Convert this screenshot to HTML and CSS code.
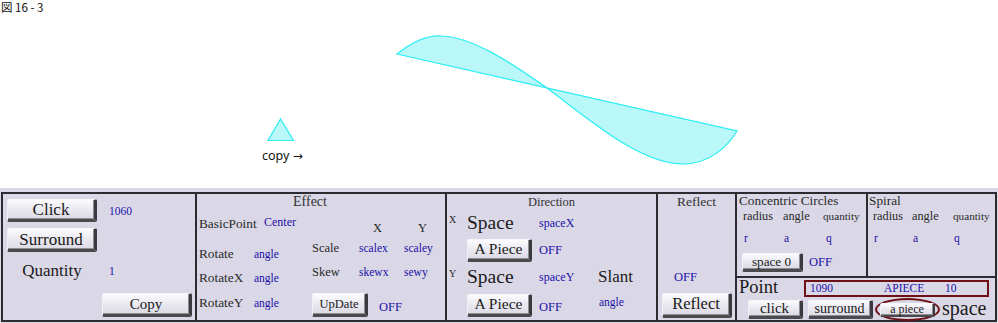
FILE: index.html
```html
<!DOCTYPE html>
<html lang="ja">
<head>
<meta charset="utf-8">
<title>図 16 - 3</title>
<link rel="stylesheet" href="styles.css">
</head>
<body>
<div class="stage">
  <div class="fig-title">図 16 - 3</div>
  <svg class="canvas" width="998" height="174" viewBox="0 14 998 174" xmlns="http://www.w3.org/2000/svg">
    <polygon class="shape" points="280.5,119 268,140.5 293.5,140.5"/>
    <text class="copy-label" x="262" y="160">copy <tspan class="arrow">→</tspan></text>
    <path class="shape" d="M397,54 C412,42 427,35 442,36 C472,37 510,62 547,88 C590,120 640,164 683,164 C710,164 728,146 737,131 Z"/>
  </svg>
</div>
<div class="panel">
  <div class="table">
    <div class="cell c-main">
      <button class="btn btn-main btn-click">Click</button><span class="val">1060</span>
      <button class="btn btn-main btn-surround">Surround</button><span></span>
      <span class="quantity">Quantity</span><span class="val">1</span>
      <button class="btn btn-copy">Copy</button>
    </div>
    <div class="cell c-effect">
      <div class="cap cap-effect">Effect</div>
      <div class="effect-body">
        <div class="rot-grid">
          <span class="lbl">BasicPoint</span><span class="val val-center">Center</span>
          <span class="lbl">Rotate</span><span class="val">angle</span>
          <span class="lbl">RotateX</span><span class="val">angle</span>
          <span class="lbl">RotateY</span><span class="val">angle</span>
        </div>
        <div class="scale-grid">
          <span></span><span class="axis">X</span><span class="axis">Y</span>
          <span class="lbl2">Scale</span><span class="val">scalex</span><span class="val">scaley</span>
          <span class="lbl2">Skew</span><span class="val">skewx</span><span class="val">sewy</span>
          <button class="btn btn-update">UpDate</button><span class="off off-update">OFF</span>
        </div>
      </div>
    </div>
    <div class="cell c-dir">
      <div class="cap cap-dir">Direction</div>
      <span class="axis-sm">X</span><span class="space-big">Space</span><span class="val val-dir">spaceX</span><span></span>
      <span></span><button class="btn btn-piece">A Piece</button><span class="off">OFF</span><span></span>
      <span class="axis-sm">Y</span><span class="space-big">Space</span><span class="val val-dir">spaceY</span><span class="slant">Slant</span>
      <span></span><button class="btn btn-piece">A Piece</button><span class="off off-low">OFF</span><span class="val angle-slant">angle</span>
    </div>
    <div class="cell c-ref">
      <div class="cap cap-ref">Reflect</div>
      <span></span>
      <span></span>
      <span class="off off-ref">OFF</span>
      <button class="btn btn-reflect">Reflect</button>
    </div>
    <div class="cell c-shapes">
      <div class="sub sub-circ">
        <div class="sub-title">Concentric Circles</div>
        <div class="param-grid circ-grid">
          <span class="hd">radius</span><span class="hd">angle</span><span class="hd hd-q">quantity</span>
          <span class="val pv">r</span><span class="val pv">a</span><span class="val pv pv-q">q</span>
        </div>
        <div class="row-btn"><button class="btn btn-space0">space 0</button><span class="off off-space">OFF</span></div>
      </div>
      <div class="sub sub-spiral">
        <div class="sub-title">Spiral</div>
        <div class="param-grid spiral-grid">
          <span class="hd">radius</span><span class="hd">angle</span><span class="hd hd-q">quantity</span>
          <span class="val pv">r</span><span class="val pv">a</span><span class="val pv">q</span>
        </div>
      </div>
      <div class="sub sub-point">
        <div class="point-row">
          <span class="point-lbl">Point</span>
          <div class="point-box"><span class="val">1090</span><span class="val">APIECE</span><span class="val">10</span></div>
        </div>
        <div class="point-btns">
          <button class="btn btn-click2">click</button>
          <button class="btn btn-surround2">surround</button>
          <span class="ring"><button class="btn btn-apiece">a piece</button></span>
          <span class="space-lbl">space</span>
        </div>
      </div>
    </div>
  </div>
</div>
</body>
</html>
```
FILE: styles.css
```css
html, body {
  margin: 0;
  padding: 0;
}
body {
  width: 998px;
  height: 323px;
  overflow: hidden;
  background: #ffffff;
  font-family: "Liberation Serif", serif;
  color: #222222;
}

/* ---------- drawing area ---------- */
.stage {
  height: 188px;
}
.fig-title {
  height: 13px;
  padding: 1px 0 0 1px;
  font-family: "Noto Sans CJK JP", "Noto Sans", sans-serif;
  font-size: 11.5px;
  line-height: 13px;
  color: #111111;
  white-space: nowrap;
}
.canvas {
  display: block;
}
.shape {
  fill: #b9f7f8;
  stroke: #2aeef2;
  stroke-width: 1.2;
}
.copy-label {
  font-family: "Noto Sans", sans-serif;
  font-size: 12.5px;
  fill: #111111;
}
.arrow {
  font-family: "DejaVu Sans", sans-serif;
  font-size: 12px;
}

/* ---------- control panel ---------- */
.panel {
  background: #dad8e6;
  padding: 4px 1px 1px 1px;
}
.table {
  display: grid;
  grid-template-columns: 192px 248px 209px 77px 258px;
  grid-template-rows: 126px;
  gap: 2px;
  padding: 2px;
  background: #2c2c30;
}
.cell {
  background: #dad8e6;
  min-width: 0;
}
.cap {
  text-align: center;
  line-height: 16px;
  height: 16px;
  color: #333333;
}
.val {
  color: #1c10a8;
  font-size: 11.5px;
  white-space: nowrap;
}
.off {
  color: #1c10a8;
  font-size: 12.5px;
}

/* ---------- buttons ---------- */
.btn {
  box-sizing: border-box;
  display: flex;
  align-items: center;
  justify-content: center;
  padding: 0;
  margin: 0;
  font-family: "Liberation Serif", serif;
  color: #1a1a1a;
  line-height: 1;
  background: linear-gradient(to bottom, #fcfcfe 0%, #ebeaf1 45%, #dcdae4 100%);
  border-style: solid;
  border-width: 1px 3px 3px 1px;
  border-color: #f6f6fa #3a3a3e #4a4a4e #f2f2f6;
  border-radius: 2px;
  box-shadow: inset -1px -1px 0 #8e8e94;
  white-space: nowrap;
}

/* ---------- column 1 ---------- */
.c-main {
  display: grid;
  grid-template-columns: 90px 1fr;
  grid-template-rows: 23px 30px 38px 27px;
  column-gap: 12px;
  padding: 5px 0 0 4px;
  align-items: center;
}
.btn-main {
  width: 90px;
  font-size: 17px;
}
.btn-click {
  height: 23px;
}
.btn-surround {
  height: 24px;
  align-self: end;
}
.quantity {
  text-align: center;
  font-size: 17px;
  color: #1a1a1a;
}
.btn-copy {
  grid-column: 1 / -1;
  justify-self: end;
  align-self: end;
  width: 90px;
  height: 24px;
  margin-right: 3px;
  font-size: 15px;
}

/* ---------- column 2 : Effect ---------- */
.c-effect {
  display: flex;
  flex-direction: column;
}
.cap-effect {
  font-size: 14px;
  padding-right: 22px;
}
.effect-body {
  display: flex;
  padding-left: 2px;
}
.rot-grid {
  display: grid;
  grid-template-columns: 55px 58px;
  grid-template-rows: 28px 32px 16px 34px;
  align-items: center;
}
.lbl {
  font-size: 13.3px;
  white-space: nowrap;
  color: #2a2a2a;
}
.val-center {
  margin-left: 10px;
  margin-bottom: 4px;
  font-size: 12px;
}
.scale-grid {
  display: grid;
  grid-template-columns: 47px 45px auto;
  grid-template-rows: 20px 20px 28px 34px;
  padding-top: 8px;
  align-items: center;
}
.axis {
  font-size: 12.5px;
  margin-left: 14px;
}
.lbl2 {
  font-size: 12.5px;
  color: #2a2a2a;
}
.btn-update {
  width: 56px;
  height: 24px;
  font-size: 12.5px;
  align-self: start;
  margin-top: 7px;
}
.off-update {
  grid-column: 2 / 4;
  margin-left: 20px;
  margin-top: 8px;
}

/* ---------- column 3 : Direction ---------- */
.c-dir {
  display: grid;
  grid-template-columns: 20px 72px 59px auto;
  grid-template-rows: 16px 26px 28px 26px 30px;
  align-items: center;
}
.cap-dir {
  grid-column: 1 / -1;
  font-size: 12.5px;
}
.axis-sm {
  align-self: start;
  padding-left: 2px;
  margin-top: 4px;
  font-size: 10px;
}
.space-big {
  font-size: 19.5px;
  color: #1a1a1a;
}
.val-dir {
  font-size: 12px;
}
.btn-piece {
  width: 65px;
  height: 23px;
  font-size: 15.5px;
}
.off-low {
  margin-top: 4px;
}
.slant {
  font-size: 17px;
  color: #1a1a1a;
}
.angle-slant {
  align-self: start;
  margin-top: 6px;
  margin-left: 1px;
}

/* ---------- column 4 : Reflect ---------- */
.c-ref {
  display: grid;
  grid-template-rows: 16px 26px 28px 26px 30px;
  align-items: center;
}
.cap-ref {
  font-size: 13.5px;
}
.off-ref {
  margin-left: 16px;
}
.btn-reflect {
  width: 70px;
  height: 25px;
  margin-left: 4px;
  font-size: 16.5px;
}

/* ---------- column 5 ---------- */
.c-shapes {
  display: grid;
  grid-template-columns: 129px 127px;
  grid-template-rows: 82px 42px;
  gap: 2px;
  background: #2c2c30;
}
.sub {
  background: #dad8e6;
  min-width: 0;
}
.sub-circ {
  padding-left: 2px;
}
.sub-spiral {
  padding-left: 1px;
}
.sub-title {
  font-size: 13.3px;
  line-height: 14px;
  height: 14px;
  color: #2a2a2a;
  white-space: nowrap;
}
.param-grid {
  display: grid;
  grid-template-rows: 16px 20px;
  row-gap: 4px;
  align-items: center;
  margin-left: 4px;
}
.circ-grid {
  grid-template-columns: 40px 40px auto;
}
.spiral-grid {
  grid-template-columns: 39px 41px auto;
}
.hd {
  font-size: 12.3px;
  color: #2a2a2a;
}
.hd-q {
  font-size: 11.2px;
}
.pv {
  margin-left: 1px;
}
.pv-q {
  margin-left: 3px;
}
.row-btn {
  display: flex;
  align-items: center;
  margin-top: 5px;
  margin-left: 3px;
}
.btn-space0 {
  width: 61px;
  height: 19px;
  font-size: 13.2px;
}
.off-space {
  margin-left: 6px;
}
.sub-point {
  grid-column: 1 / -1;
  display: flex;
  flex-direction: column;
}
.point-row {
  display: flex;
  align-items: center;
  height: 19px;
  padding-left: 2px;
}
.point-lbl {
  width: 65px;
  font-size: 18.5px;
  line-height: 19px;
  color: #1a1a1a;
}
.point-box {
  box-sizing: border-box;
  width: 185px;
  height: 17px;
  margin-top: 1px;
  border: 2px solid #6e1016;
  display: grid;
  grid-template-columns: 74px 61px auto;
  align-items: center;
  padding-left: 4px;
}
.point-btns {
  display: flex;
  align-items: flex-start;
  padding-left: 11px;
  height: 23px;
}
.btn-click2 {
  width: 55px;
  height: 19px;
  margin-top: 3px;
  font-size: 15px;
}
.btn-surround2 {
  width: 65px;
  height: 19px;
  margin-top: 3px;
  margin-left: 5px;
  font-size: 14px;
}
.ring {
  box-sizing: border-box;
  width: 65px;
  height: 23px;
  margin-top: 1px;
  margin-left: 2px;
  border: 2px solid #6e1016;
  border-radius: 50%;
  display: flex;
  align-items: center;
  justify-content: center;
}
.btn-apiece {
  width: 55px;
  height: 14px;
  font-size: 12px;
  border-width: 1px 2px 2px 1px;
}
.space-lbl {
  margin-left: 2px;
  font-size: 20px;
  line-height: 22px;
  color: #1a1a1a;
}
```
